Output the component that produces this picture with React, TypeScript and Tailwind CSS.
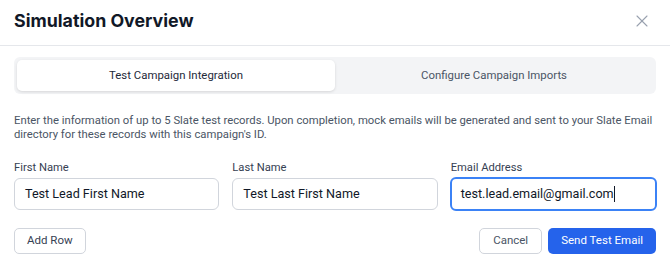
import { X } from "lucide-react"

// ── Simulation overview dialog ────────────────────────────────────────────────
const fields = [
  { label: "First Name", value: "Test Lead First Name" },
  { label: "Last Name", value: "Test Last First Name" },
  { label: "Email Address", value: "test.lead.email@gmail.com", focused: true },
]

export default function App() {
  return (
    <div className="w-[670px] h-[264px] bg-white font-['Roboto',sans-serif] text-gray-900 overflow-hidden">
      {/* Header */}
      <div className="flex items-center justify-between h-[46px] pl-[14px] pr-[18px] border-b border-gray-200">
        <h1 className="font-['Inter',sans-serif] text-[17.8px] font-bold text-[#111827] pb-[2px]">Simulation Overview</h1>
        <button className="text-gray-400 pb-[4px]">
          <X size={20} strokeWidth={1.3} />
        </button>
      </div>

      <div className="px-[14px] pt-[11px]">
        {/* Tabs */}
        <div className="flex h-[37px] p-[3px] rounded-[6px] bg-[#f3f4f6]">
          <div className="flex-1 flex items-center justify-center rounded-[5px] bg-white shadow-[0_1px_3px_rgba(0,0,0,0.12)] text-[11.4px] text-gray-800">
            Test Campaign Integration
          </div>
          <div className="flex-1 flex items-center justify-center text-[11.4px] text-gray-600">
            Configure Campaign Imports
          </div>
        </div>

        {/* Description */}
        <p className="mt-[20px] text-[11.3px] leading-[14px] text-gray-600">
          Enter the information of up to 5 Slate test records. Upon completion, mock emails will be generated and sent to your Slate Email directory for these records with this campaign's ID.
        </p>

        {/* Fields */}
        <div className="grid grid-cols-3 gap-[13px] mt-[19px]">
          {fields.map((f) => (
            <div key={f.label} className="flex flex-col">
              <label className="text-[11.2px] leading-[13px] text-gray-700 mb-[4px]">{f.label}</label>
              <div
                className={
                  f.focused
                    ? "h-[34px] -mx-[1px] -my-[1px] px-[9px] flex items-center rounded-[6px] border-2 border-[#3b82f6] text-[12.6px] text-gray-900"
                    : "h-[32px] px-[10px] flex items-center rounded-[6px] border border-gray-300 text-[12.6px] text-gray-900"
                }
              >
                {f.value}
                {f.focused && <span className="w-px h-[16px] bg-gray-900" />}
              </div>
            </div>
          ))}
        </div>

        {/* Actions */}
        <div className="flex items-center justify-between mt-[18px]">
          <button className="h-[26px] px-[12px] rounded-[5px] border border-gray-300 text-[11.5px] text-gray-700">Add Row</button>
          <div className="flex gap-[6px]">
            <button className="h-[26px] px-[13px] rounded-[5px] border border-gray-300 text-[11.5px] text-gray-600">Cancel</button>
            <button className="h-[26px] px-[13px] rounded-[5px] bg-[#2563eb] text-[11.5px] text-white">Send Test Email</button>
          </div>
        </div>
      </div>
    </div>
  )
}
